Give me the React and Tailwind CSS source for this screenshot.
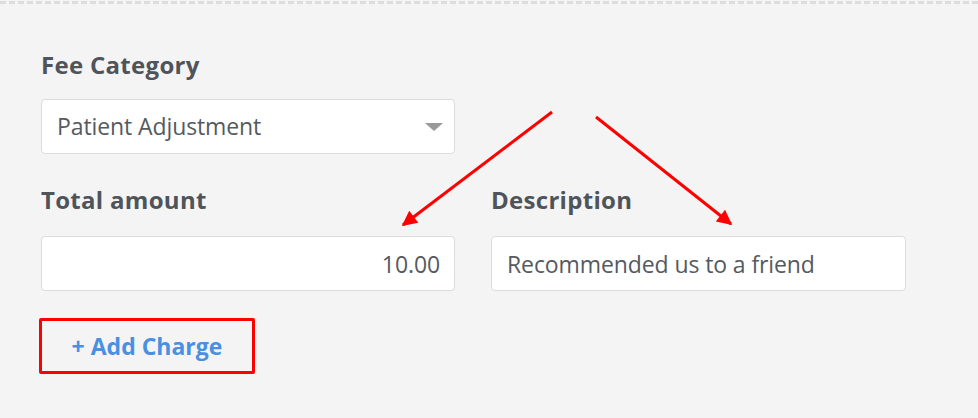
import { useState } from "react";

const FONT = "font-['Open_Sans','Lato',sans-serif]";

const Arrows = () => (
  <svg
    className="pointer-events-none absolute left-0 top-0"
    width="978"
    height="418"
    viewBox="0 0 978 418"
  >
    <defs>
      <marker id="head" viewBox="0 0 10 10" refX="9" refY="5" markerWidth="6" markerHeight="5" orient="auto">
        <path d="M0 0 L10 5 L0 10 z" fill="#ff0000" />
      </marker>
    </defs>
    <line x1="552" y1="112" x2="403" y2="225" stroke="#ff0000" strokeWidth="3" markerEnd="url(#head)" />
    <line x1="596" y1="117" x2="731" y2="224" stroke="#ff0000" strokeWidth="3" markerEnd="url(#head)" />
  </svg>
);

const Label = ({ children }) => (
  <label className="block text-[24px] leading-[28px] font-bold tracking-[0.3px] text-[#4f545a]">{children}</label>
);

const ChargeForm = () => {
  const [amount, setAmount] = useState("10.00");
  const [desc, setDesc] = useState("Recommended us to a friend");

  return (
    <div className={`relative min-h-[418px] w-[978px] overflow-hidden bg-[#f4f4f4] ${FONT}`}>
      {/* dashed top separator */}
      <div className="mt-px h-[3px] bg-[repeating-linear-gradient(90deg,#dddddd_0_6px,transparent_6px_9px)]" />

      <div className="pl-[41px] pr-[72px] pt-[47px]">
        <Label>Fee Category</Label>
        <div className="mt-[20px] flex h-[55px] w-[414px] items-center justify-between rounded-[4px] border border-[#dcdcdc] bg-white pl-[15px] pr-[11px]">
          <span className="text-[23px] tracking-[-0.1px] text-[#555a60]">Patient Adjustment</span>
          <span className="h-0 w-0 border-x-[9px] border-t-[8px] border-x-transparent border-t-[#999999]" />
        </div>

        <div className="mt-[32px] grid grid-cols-[414px_415px] gap-x-[36px]">
          <div>
            <Label>Total amount</Label>
            <input
              value={amount}
              onChange={(e) => setAmount(e.target.value)}
              className="mt-[22px] h-[55px] w-full rounded-[4px] border border-[#dcdcdc] bg-white px-[14px] text-right text-[23px] tracking-[-0.1px] text-[#555a60] outline-none"
            />
          </div>
          <div>
            <Label>Description</Label>
            <input
              value={desc}
              onChange={(e) => setDesc(e.target.value)}
              className="mt-[22px] h-[55px] w-full rounded-[4px] border border-[#dcdcdc] bg-white px-[15px] text-[23px] tracking-[-0.1px] text-[#555a60] outline-none"
            />
          </div>
        </div>

        <button className="-ml-[2px] mt-[27px] flex h-[56px] w-[216px] items-center justify-center rounded-[2px] border-[3px] border-[#ff0000] text-[23px] font-bold text-[#4a90e2]">
          + Add Charge
        </button>
      </div>

      <Arrows />
    </div>
  );
};

export default function App() {
  return <ChargeForm />;
}
